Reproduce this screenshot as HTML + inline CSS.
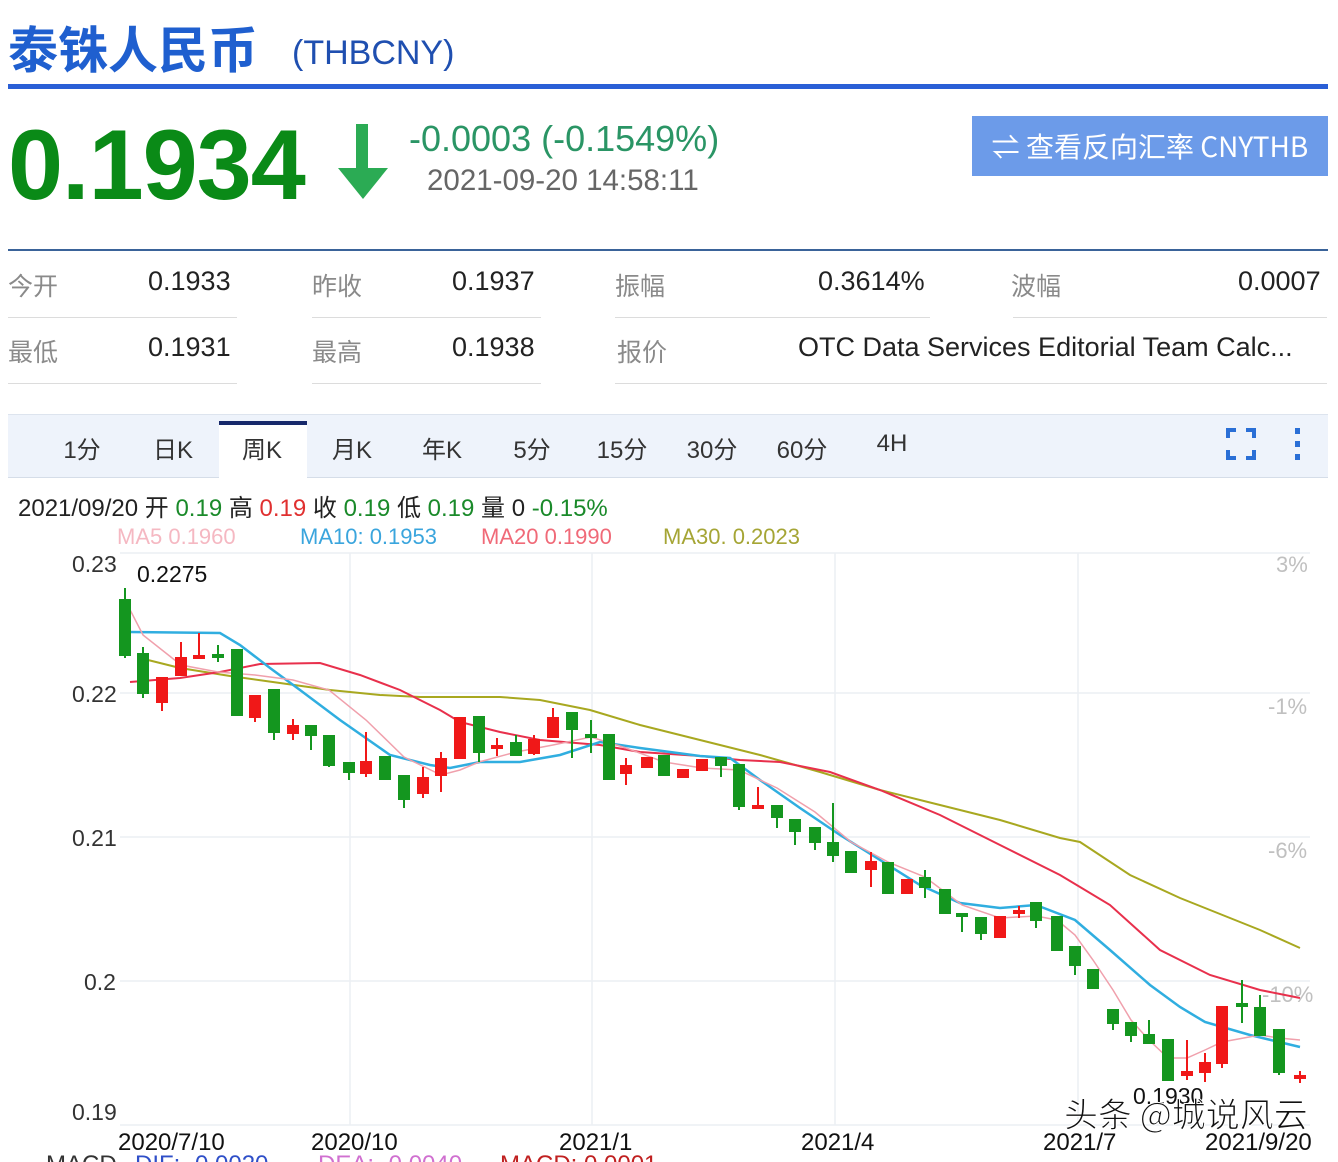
<!DOCTYPE html>
<html><head><meta charset="utf-8">
<style>
body{margin:0;width:1338px;height:1162px;overflow:hidden;background:#fff;font-family:"Liberation Sans","Noto Sans CJK SC",sans-serif;position:relative}
.a{position:absolute;white-space:nowrap}
.lbl{color:#8a8a8a;font-size:25px}
.val{color:#222;font-size:27px}
.ul{position:absolute;height:1px;background:#dcdcdc}
.tab{position:absolute;top:430px;font-size:24px;color:#333;transform:translateX(-50%)}
</style></head><body>
<div class="a" style="left:8px;top:14px;font-size:50px;font-weight:bold;color:#1f5fcf;font-family:'Noto Sans CJK SC',sans-serif;line-height:66px">泰铢人民币</div>
<div class="a" style="left:292px;top:34px;font-size:34px;color:#1f4fb0;">(THBCNY)</div>
<div class="a" style="left:8px;top:84px;width:1320px;height:5px;background:#2a5fd6"></div>

<div class="a" style="left:8px;top:109px;font-size:99px;font-weight:bold;color:#0a8a17;line-height:112px;letter-spacing:-1px">0.1934</div>
<svg class="a" style="left:336px;top:124px" width="54" height="76"><rect x="20" y="0" width="12" height="50" fill="#2bab54"/><polygon points="2,44 52,44 27,75" fill="#2bab54"/></svg>
<div class="a" style="left:409px;top:118px;font-size:36px;color:#2a9565">-0.0003 (-0.1549%)</div>
<div class="a" style="left:427px;top:164px;font-size:29.5px;color:#666">2021-09-20 14:58:11</div>
<div class="a" style="left:972px;top:116px;width:356px;height:60px;background:#6c9be9;color:#fff;font-size:28px;line-height:60px;text-align:center;font-family:'Noto Sans CJK SC',sans-serif">⇌ 查看反向汇率 CNYTHB</div>

<div class="a" style="left:8px;top:249px;width:1320px;height:2px;background:#3a6399"></div>
<div class="a lbl" style="left:8px;top:267px">今开</div><div class="a val" style="left:148px;top:266px">0.1933</div>
<div class="a lbl" style="left:312px;top:267px">昨收</div><div class="a val" style="left:452px;top:266px">0.1937</div>
<div class="a lbl" style="left:615px;top:267px">振幅</div><div class="a val" style="left:818px;top:266px">0.3614%</div>
<div class="a lbl" style="left:1011px;top:267px">波幅</div><div class="a val" style="left:1238px;top:266px">0.0007</div>
<div class="ul" style="left:8px;top:317px;width:229px"></div><div class="ul" style="left:312px;top:317px;width:229px"></div><div class="ul" style="left:615px;top:317px;width:315px"></div><div class="ul" style="left:1013px;top:317px;width:314px"></div>
<div class="a lbl" style="left:8px;top:333px">最低</div><div class="a val" style="left:148px;top:332px">0.1931</div>
<div class="a lbl" style="left:312px;top:333px">最高</div><div class="a val" style="left:452px;top:332px">0.1938</div>
<div class="a lbl" style="left:617px;top:333px">报价</div><div class="a val" style="left:798px;top:332px">OTC Data Services Editorial Team Calc...</div>
<div class="ul" style="left:8px;top:383px;width:229px"></div><div class="ul" style="left:312px;top:383px;width:229px"></div><div class="ul" style="left:615px;top:383px;width:712px"></div>

<div class="a" style="left:8px;top:414px;width:1320px;height:62px;background:#eef3fb;border-top:1px solid #dde4ee;border-bottom:1px solid #d5dde8"></div>
<div class="a" style="left:219px;top:421px;width:88px;height:57px;background:#fff;border-top:4px solid #17296b"></div>
<div class="tab" style="left:82px">1分</div><div class="tab" style="left:173px">日K</div><div class="tab" style="left:262px">周K</div><div class="tab" style="left:352px">月K</div><div class="tab" style="left:442px">年K</div><div class="tab" style="left:532px">5分</div><div class="tab" style="left:622px">15分</div><div class="tab" style="left:712px">30分</div><div class="tab" style="left:802px">60分</div><div class="tab" style="left:892px">4H</div>
<svg class="a" style="left:1224px;top:426px" width="90" height="36"><g fill="none" stroke="#2a6fd6" stroke-width="4"><path d="M4 12V4H12M22 4H30V12M30 24V32H22M12 32H4V24"/></g><g fill="#2a6fd6"><rect x="71" y="2" width="5" height="6"/><rect x="71" y="15" width="5" height="6"/><rect x="71" y="28" width="5" height="6"/></g></svg>

<div class="a" style="left:18px;top:488px;font-size:24px;color:#222">2021/09/20 开 <span style="color:#1a8a2a">0.19</span> 高 <span style="color:#e03030">0.19</span> 收 <span style="color:#1a8a2a">0.19</span> 低 <span style="color:#1a8a2a">0.19</span> 量 0 <span style="color:#1a8a2a">-0.15%</span></div>
<div class="a" style="left:117px;top:524px;font-size:22px;color:#f5b8c2">MA5 0.1960</div>
<div class="a" style="left:300px;top:524px;font-size:22px;color:#3aa5dd">MA10: 0.1953</div>
<div class="a" style="left:481px;top:524px;font-size:22px;color:#f06a78">MA20 0.1990</div>
<div class="a" style="left:663px;top:524px;font-size:22px;color:#a5a535">MA30. 0.2023</div>

<svg class="a" style="left:0;top:540px" width="1338" height="622" viewBox="0 540 1338 622">
<g stroke="#eceff3" stroke-width="1.5">
<line x1="120" y1="553" x2="1310" y2="553"/><line x1="120" y1="693" x2="1310" y2="693"/><line x1="120" y1="837" x2="1310" y2="837"/><line x1="120" y1="981" x2="1310" y2="981"/><line x1="120" y1="1125" x2="1310" y2="1125"/>
<line x1="350" y1="553" x2="350" y2="1125"/><line x1="592" y1="553" x2="592" y2="1125"/><line x1="835" y1="553" x2="835" y2="1125"/><line x1="1078" y1="553" x2="1078" y2="1125"/>
</g>
<g font-size="23" fill="#333" font-family="Liberation Sans,sans-serif">
<text x="72" y="572">0.23</text><text x="72" y="702">0.22</text><text x="72" y="846">0.21</text><text x="84" y="990">0.2</text><text x="72" y="1120">0.19</text>
<text x="137" y="582" fill="#111">0.2275</text>
</g>
<g font-size="22" fill="#c0c0c0"><text x="1276" y="572">3%</text><text x="1268" y="714">-1%</text><text x="1268" y="858">-6%</text><text x="1262" y="1002">-10%</text></g>
<polyline fill="none" stroke="#a8a820" stroke-width="2" points="140,658 180,668 230,676 280,683 330,690 380,695 420,697 460,697 500,697 540,700 590,710 640,725 700,740 760,755 820,772 880,790 940,805 1000,820 1060,838 1080,842 1130,875 1180,898 1210,910 1260,930 1300,948"/>
<polyline fill="none" stroke="#e8304c" stroke-width="2" points="130,682 180,678 220,672 260,664 320,663 360,675 400,690 440,710 460,722 500,732 540,740 600,745 640,752 700,756 740,760 780,762 830,772 880,790 940,815 1000,845 1060,875 1110,905 1160,950 1210,975 1260,990 1300,998"/>
<polyline fill="none" stroke="#30aee0" stroke-width="2.5" points="130,632 220,633 240,645 270,668 300,690 340,720 390,755 430,765 450,768 480,762 520,762 560,755 600,742 640,748 700,756 730,758 760,780 800,808 840,835 880,860 920,885 960,903 1000,908 1036,905 1075,920 1110,950 1150,985 1180,1007 1205,1022 1250,1035 1300,1047"/>
<polyline fill="none" stroke="#f0a0ac" stroke-width="1.5" points="125,600 143,635 181,665 218,672 255,675 293,680 329,690 366,720 404,757 441,775 460,770 479,762 516,752 553,745 591,737 626,748 664,762 702,768 739,770 777,788 815,812 851,842 888,862 925,877 962,905 1000,918 1036,916 1057,920 1075,935 1093,960 1113,990 1131,1020 1149,1040 1168,1058 1187,1058 1205,1050 1222,1042 1260,1035 1279,1038 1300,1040"/>
<g fill="#14961f" stroke="#14961f" stroke-width="2">
<line x1="125" y1="588" x2="125" y2="658"/><rect x="120" y="600" width="10" height="55"/>
<line x1="143" y1="647" x2="143" y2="698"/><rect x="138" y="654" width="10" height="39"/>
<line x1="218" y1="645" x2="218" y2="662"/><rect x="213" y="655" width="10" height="2"/>
<rect x="232" y="650" width="10" height="65"/>
<line x1="274" y1="690" x2="274" y2="740"/><rect x="269" y="690" width="10" height="42"/>
<line x1="311" y1="726" x2="311" y2="750"/><rect x="306" y="726" width="10" height="9"/>
<line x1="329" y1="736" x2="329" y2="767"/><rect x="324" y="736" width="10" height="29"/>
<line x1="349" y1="763" x2="349" y2="780"/><rect x="344" y="763" width="10" height="9"/>
<rect x="380" y="757" width="10" height="22"/>
<line x1="404" y1="776" x2="404" y2="808"/><rect x="399" y="776" width="10" height="23"/>
<line x1="479" y1="717" x2="479" y2="762"/><rect x="474" y="717" width="10" height="35"/>
<line x1="516" y1="735" x2="516" y2="755"/><rect x="511" y="743" width="10" height="12"/>
<line x1="572" y1="713" x2="572" y2="758"/><rect x="567" y="713" width="10" height="16"/>
<line x1="591" y1="720" x2="591" y2="753"/><rect x="586" y="735" width="10" height="2"/>
<rect x="604" y="735" width="10" height="44"/>
<rect x="659" y="756" width="10" height="19"/>
<line x1="721" y1="758" x2="721" y2="777"/><rect x="716" y="758" width="10" height="7"/>
<line x1="739" y1="765" x2="739" y2="810"/><rect x="734" y="765" width="10" height="41"/>
<line x1="777" y1="806" x2="777" y2="828"/><rect x="772" y="806" width="10" height="11"/>
<line x1="795" y1="820" x2="795" y2="845"/><rect x="790" y="820" width="10" height="11"/>
<line x1="815" y1="828" x2="815" y2="850"/><rect x="810" y="828" width="10" height="14"/>
<line x1="833" y1="803" x2="833" y2="862"/><rect x="828" y="843" width="10" height="12"/>
<rect x="846" y="852" width="10" height="20"/>
<rect x="883" y="863" width="10" height="30"/>
<line x1="925" y1="870" x2="925" y2="898"/><rect x="920" y="878" width="10" height="9"/>
<rect x="940" y="890" width="10" height="23"/>
<line x1="962" y1="915" x2="962" y2="932"/><rect x="957" y="914" width="10" height="2"/>
<line x1="981" y1="918" x2="981" y2="940"/><rect x="976" y="918" width="10" height="15"/>
<line x1="1036" y1="903" x2="1036" y2="928"/><rect x="1031" y="903" width="10" height="17"/>
<rect x="1052" y="917" width="10" height="33"/>
<line x1="1075" y1="947" x2="1075" y2="975"/><rect x="1070" y="947" width="10" height="18"/>
<rect x="1088" y="970" width="10" height="18"/>
<line x1="1113" y1="1010" x2="1113" y2="1030"/><rect x="1108" y="1010" width="10" height="13"/>
<line x1="1131" y1="1023" x2="1131" y2="1042"/><rect x="1126" y="1023" width="10" height="12"/>
<line x1="1149" y1="1020" x2="1149" y2="1043"/><rect x="1144" y="1035" width="10" height="8"/>
<rect x="1163" y="1040" width="10" height="40"/>
<line x1="1242" y1="980" x2="1242" y2="1023"/><rect x="1237" y="1004" width="10" height="2"/>
<line x1="1260" y1="995" x2="1260" y2="1035"/><rect x="1255" y="1008" width="10" height="27"/>
<line x1="1279" y1="1030" x2="1279" y2="1075"/><rect x="1274" y="1030" width="10" height="42"/>
</g>
<g fill="#f01818" stroke="#f01818" stroke-width="2">
<line x1="162" y1="678" x2="162" y2="711"/><rect x="157" y="678" width="10" height="24"/>
<line x1="181" y1="642" x2="181" y2="675"/><rect x="176" y="658" width="10" height="17"/>
<line x1="199" y1="633" x2="199" y2="657"/><rect x="194" y="656" width="10" height="2"/>
<line x1="255" y1="696" x2="255" y2="722"/><rect x="250" y="696" width="10" height="21"/>
<line x1="293" y1="719" x2="293" y2="740"/><rect x="288" y="726" width="10" height="7"/>
<line x1="366" y1="732" x2="366" y2="777"/><rect x="361" y="762" width="10" height="11"/>
<line x1="423" y1="767" x2="423" y2="798"/><rect x="418" y="778" width="10" height="15"/>
<line x1="441" y1="752" x2="441" y2="792"/><rect x="436" y="759" width="10" height="16"/>
<rect x="455" y="718" width="10" height="40"/>
<line x1="497" y1="738" x2="497" y2="756"/><rect x="492" y="746" width="10" height="2"/>
<line x1="534" y1="735" x2="534" y2="755"/><rect x="529" y="740" width="10" height="13"/>
<line x1="553" y1="708" x2="553" y2="737"/><rect x="548" y="718" width="10" height="19"/>
<line x1="626" y1="758" x2="626" y2="785"/><rect x="621" y="766" width="10" height="7"/>
<rect x="642" y="758" width="10" height="9"/>
<rect x="678" y="770" width="10" height="7"/>
<rect x="697" y="760" width="10" height="10"/>
<line x1="758" y1="787" x2="758" y2="808"/><rect x="753" y="806" width="10" height="2"/>
<line x1="871" y1="852" x2="871" y2="887"/><rect x="866" y="862" width="10" height="7"/>
<rect x="902" y="880" width="10" height="13"/>
<rect x="995" y="917" width="10" height="20"/>
<line x1="1019" y1="906" x2="1019" y2="918"/><rect x="1014" y="911" width="10" height="2"/>
<line x1="1187" y1="1040" x2="1187" y2="1080"/><rect x="1182" y="1072" width="10" height="3"/>
<line x1="1205" y1="1053" x2="1205" y2="1082"/><rect x="1200" y="1063" width="10" height="9"/>
<line x1="1222" y1="1007" x2="1222" y2="1068"/><rect x="1217" y="1007" width="10" height="56"/>
<line x1="1300" y1="1071" x2="1300" y2="1083"/><rect x="1295" y="1076" width="10" height="2"/>
</g>
<text x="1133" y="1104" font-size="23" fill="#111">0.1930</text>
<g font-size="24" fill="#111"><text x="118" y="1150">2020/7/10</text><text x="311" y="1150">2020/10</text><text x="559" y="1150">2021/1</text><text x="801" y="1150">2021/4</text><text x="1043" y="1150">2021/7</text><text x="1205" y="1150">2021/9/20</text></g>
<g font-size="24"><text x="46" y="1172" fill="#333">MACD</text><text x="135" y="1172" fill="#2f4fc8">DIF: -0.0020</text><text x="318" y="1172" fill="#d070d0">DEA: -0.0040</text><text x="500" y="1172" fill="#c02020">MACD: 0.0001</text></g>
<text x="1064" y="1127" font-size="34" fill="#111" stroke="#fff" stroke-width="1" font-family="Noto Sans CJK SC,sans-serif">头条 @城说风云</text>
</svg>
</body></html>
